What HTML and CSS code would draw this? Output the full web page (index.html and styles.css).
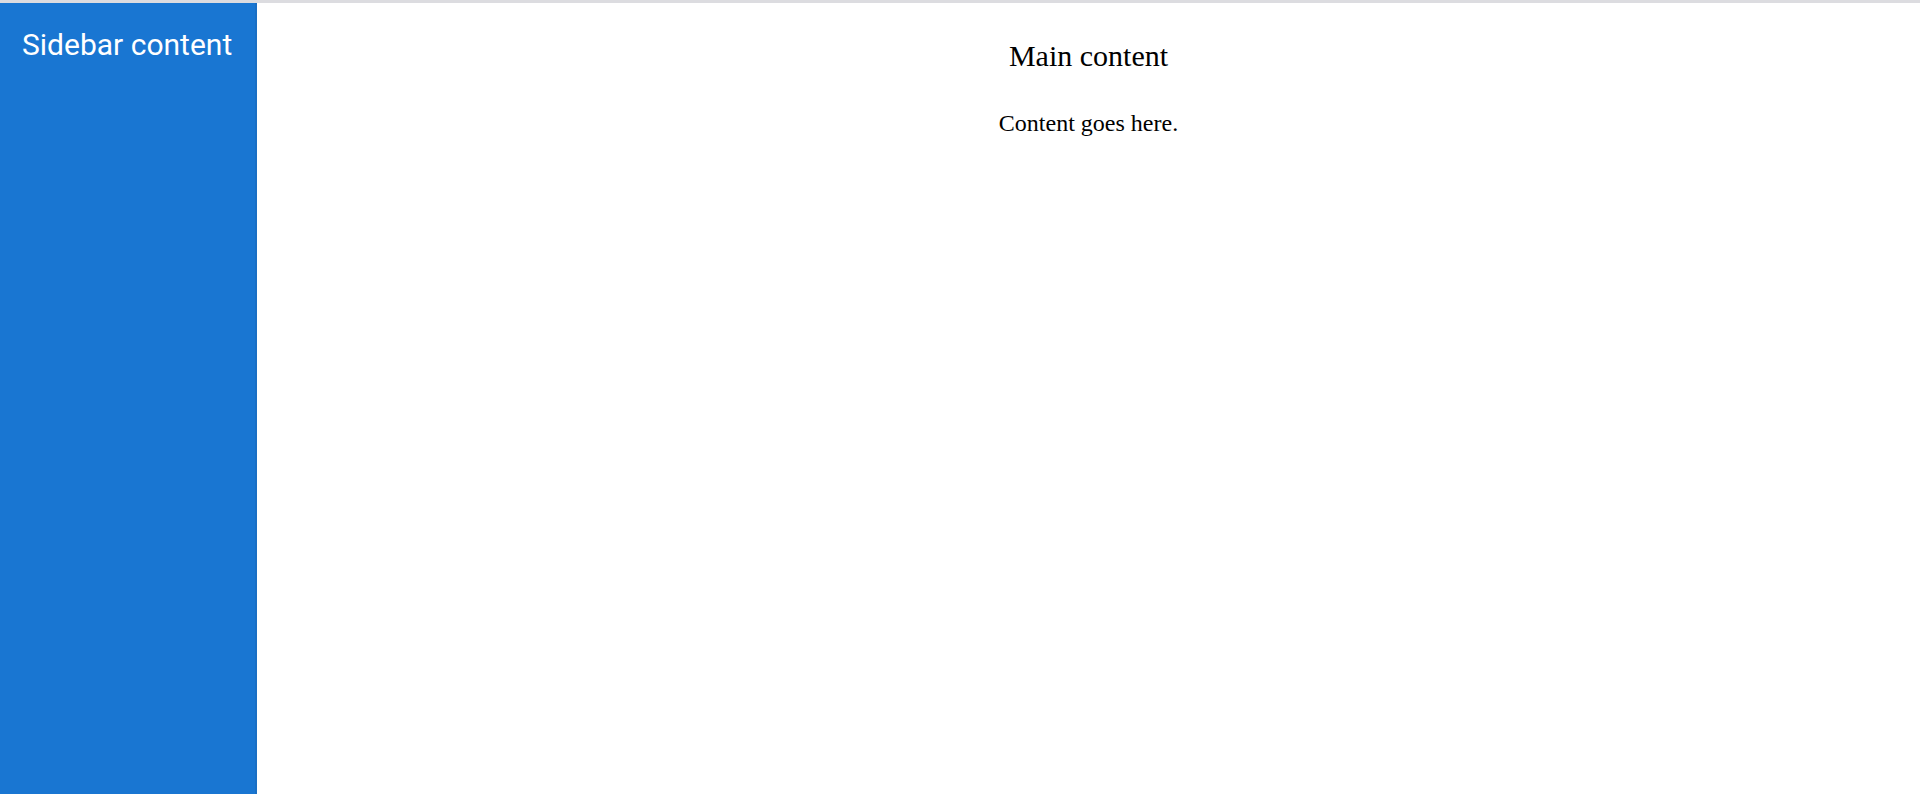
FILE: index.html
```html
<!DOCTYPE html>
<html>
<head>
<meta charset="utf-8">
<link rel="stylesheet" href="styles.css">
</head>
<body>
<div class="topline"></div>
<div class="layout">
  <aside class="sidebar">
    <div class="sidebar-title">Sidebar content</div>
  </aside>
  <main class="main">
    <h2 class="main-title">Main content</h2>
    <p class="main-text">Content goes here.</p>
  </main>
</div>
</body>
</html>
```
FILE: styles.css
```css
html, body {
  margin: 0;
  padding: 0;
  height: 100%;
  background: #ffffff;
}
body {
  display: flex;
  flex-direction: column;
  overflow: hidden;
}
.topline {
  height: 3px;
  background: #dcdce0;
  flex: none;
}
.layout {
  flex: 1;
  display: flex;
}
.sidebar {
  flex: none;
  width: 257px;
  background: #1976d2;
  border-right: 2px solid #1a6fc4;
  padding: 24px 0 0 22px;
  box-sizing: border-box;
}
.sidebar-title {
  font-family: Roboto, sans-serif;
  font-size: 30px;
  color: #ffffff;
}
.main {
  flex: 1;
  text-align: center;
  font-family: "Liberation Serif", serif;
  color: #000;
  padding-top: 36px;
}
.main-title {
  font-size: 30px;
  font-weight: normal;
  margin: 0;
}
.main-text {
  font-size: 24px;
  margin: 37px 0 0;
}
```
